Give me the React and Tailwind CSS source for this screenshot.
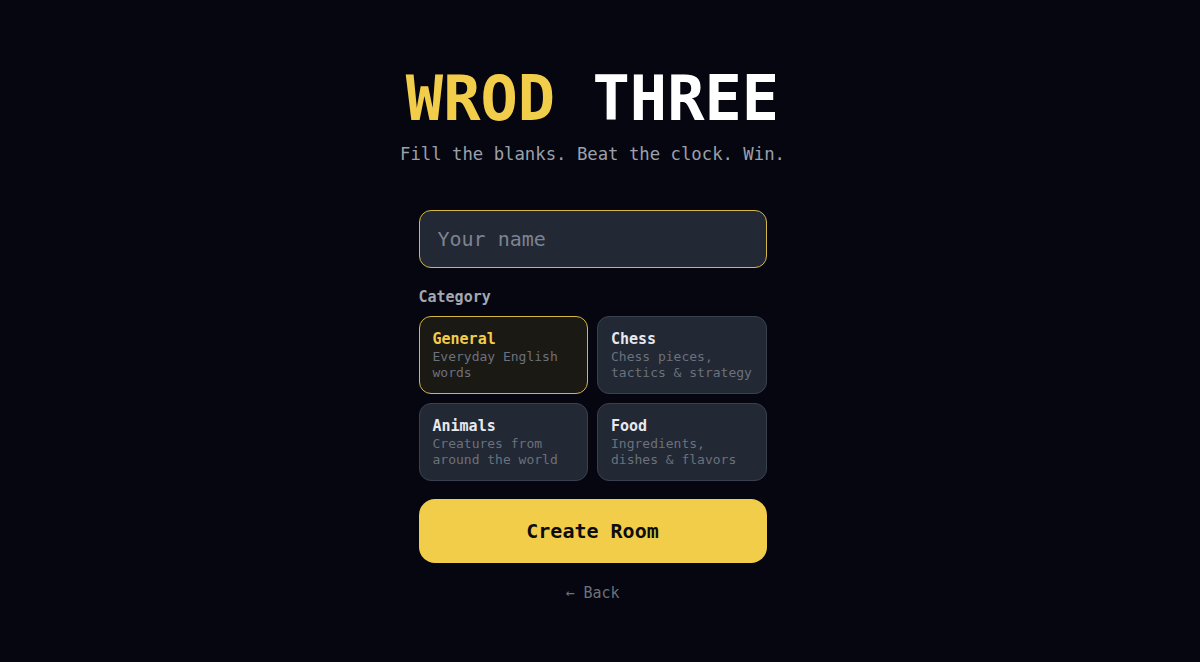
import { useState } from 'react';

const categories = [
  { id: 'general', name: 'General', desc: 'Everyday English words' },
  { id: 'chess', name: 'Chess', desc: 'Chess pieces, tactics & strategy' },
  { id: 'animals', name: 'Animals', desc: 'Creatures from around the world' },
  { id: 'food', name: 'Food', desc: 'Ingredients, dishes & flavors' },
];

const mono = { fontFamily: '"DejaVu Sans Mono", "Liberation Mono", monospace' };

export default function App() {
  const [name, setName] = useState('');
  const [selected, setSelected] = useState('general');

  return (
    <div className="min-h-screen w-full bg-[#05060f] pr-[15px] text-white" style={mono}>
      <div className="flex flex-col items-center pt-[68px]">
        <h1 className="text-[62px] font-bold leading-none">
          <span className="text-[#f2cd4a]">WROD</span>{' '}
          <span className="text-white">THREE</span>
        </h1>
        <p className="mt-3 text-[17.3px] leading-6 text-[#9ca0ab]">
          Fill the blanks. Beat the clock. Win.
        </p>

        <div className="mt-11 flex w-[348px] flex-col">
          <input
            value={name}
            onChange={(e) => setName(e.target.value)}
            placeholder="Your name"
            className="h-[58px] w-full rounded-xl border border-[#d6b647] bg-[#222834] px-[18px] text-xl text-white outline-none placeholder:text-[#7d8391]"
            style={mono}
          />

          <div className="mt-[19px] mb-[9px] text-[15px] font-bold leading-5 text-[#a3a7b2]">
            Category
          </div>

          <div className="grid grid-cols-2 gap-[9px]">
            {categories.map((c) => {
              const active = c.id === selected;
              return (
                <button
                  key={c.id}
                  onClick={() => setSelected(c.id)}
                  className={
                    active
                      ? 'rounded-xl border border-[#d6b647] bg-[#1b1914] px-[13px] py-3 text-left'
                      : 'rounded-xl border border-[#3a414e] bg-[#222834] px-[13px] py-3 text-left'
                  }
                  style={mono}
                >
                  <div
                    className={
                      active
                        ? 'text-[15px] font-bold leading-5 text-[#f2cd4a]'
                        : 'text-[15px] font-bold leading-5 text-[#e8e9ee]'
                    }
                  >
                    {c.name}
                  </div>
                  <div className="text-[13px] leading-4 text-[#6b717d]">{c.desc}</div>
                </button>
              );
            })}
          </div>

          <button
            className="mt-[18px] h-16 w-full rounded-2xl bg-[#f2cd4a] text-xl font-bold text-[#0d0d0d]"
            style={mono}
          >
            Create Room
          </button>

          <button className="mt-5 self-center text-[15px] leading-5 text-[#6b717d]" style={mono}>
            ← Back
          </button>
        </div>
      </div>
    </div>
  );
}
